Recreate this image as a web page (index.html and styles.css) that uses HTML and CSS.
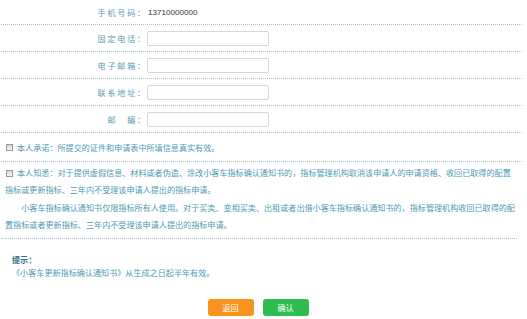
FILE: index.html
```html
<!DOCTYPE html>
<html lang="zh-CN">
<head>
<meta charset="utf-8">
<link rel="stylesheet" href="styles.css">
</head>
<body>
<div class="page">
  <div class="form-row first">
    <span class="label">手机号码：</span>
    <span class="value">13710000000</span>
  </div>
  <div class="form-row">
    <span class="label">固定电话：</span>
    <input class="field" type="text">
  </div>
  <div class="form-row">
    <span class="label">电子邮箱：</span>
    <input class="field" type="text">
  </div>
  <div class="form-row">
    <span class="label">联系地址：</span>
    <input class="field" type="text">
  </div>
  <div class="form-row">
    <span class="label">邮　编：</span>
    <input class="field" type="text">
  </div>
  <div class="check-row">
    <span class="box"></span><span>本人承诺：所提交的证件和申请表中所填信息真实有效。</span>
  </div>
  <div class="notice">
    <p class="para"><span class="box"></span>本人知悉：对于提供虚假信息、材料或者伪造、涂改小客车指标确认通知书的，指标管理机构取消该申请人的申请资格、收回已取得的配置指标或更新指标、三年内不受理该申请人提出的指标申请。</p>
    <p class="para indent">小客车指标确认通知书仅限指标所有人使用。对于买卖、变相买卖、出租或者出借小客车指标确认通知书的，指标管理机构收回已取得的配置指标或者更新指标、三年内不受理该申请人提出的指标申请。</p>
  </div>
  <div class="tips">
    <div class="tips-title">提示：</div>
    <div class="tips-text">《小客车更新指标确认通知书》从生成之日起半年有效。</div>
  </div>
  <div class="actions">
    <button class="btn btn-back" type="button">返回</button>
    <button class="btn btn-ok" type="button">确认</button>
  </div>
</div>
</body>
</html>
```
FILE: styles.css
```css
html, body {
  margin: 0;
  padding: 0;
  background: #ffffff;
}
body {
  font-family: "Noto Sans CJK SC", "Noto Sans", sans-serif;
  font-size: 8.1px;
  color: #4f9bb0;
}
.page {
  width: 527px;
  height: 319px;
  overflow: hidden;
}
.form-row {
  display: flex;
  align-items: center;
  height: 26px;
  margin: 0 5px 0 1px;
  border-bottom: 1px dotted #a9c3cc;
}
.form-row.first {
  height: 24px;
}
.label {
  width: 146px;
  text-align: right;
  letter-spacing: 1.8px;
  color: #5a9db2;
  white-space: nowrap;
}
.value {
  font-family: "Liberation Sans", Arial, sans-serif;
  color: #333333;
  font-size: 8.1px;
  margin-left: 1px;
}
.field {
  box-sizing: border-box;
  width: 122px;
  height: 15px;
  margin: 0;
  padding: 0;
  border: 1px solid #d6d6d6;
  border-radius: 2px;
  background: #ffffff;
  outline: none;
}
.check-row {
  display: flex;
  align-items: center;
  height: 28px;
  margin: 0 5px 0 1px;
  padding-left: 5px;
  border-bottom: 1px dotted #a9c3cc;
}
.box {
  display: inline-block;
  box-sizing: border-box;
  width: 7px;
  height: 7px;
  border: 1px solid #9a9a9a;
  background: linear-gradient(#d8d8d8, #f4f4f4);
  margin-right: 4px;
  vertical-align: -0.5px;
}
.notice {
  width: 512px;
  margin: 0 5px 0 1px;
  padding: 2px 0 4px 4px;
  border-bottom: 1px dotted #a9c3cc;
  box-sizing: content-box;
}
.para {
  margin: 0;
  line-height: 17.4px;
  width: 512px;
}
.para .box {
  margin-left: 1px;
}
.indent {
  text-indent: 16.2px;
}
.tips {
  padding: 14px 0 0 12px;
  line-height: 13.5px;
}
.tips-title {
  font-weight: bold;
  color: #2e7189;
}
.tips-text {
  color: #4f9bb0;
}
.actions {
  display: flex;
  justify-content: center;
  gap: 9px;
  width: 516px;
  margin-top: 19px;
}
.btn {
  width: 46px;
  height: 17px;
  border: none;
  border-radius: 3px;
  color: #ffffff;
  font-family: "Noto Sans CJK SC", sans-serif;
  font-size: 8.1px;
  padding: 0;
  line-height: 17px;
}
.btn-back {
  background: #f7941e;
}
.btn-ok {
  background: #2fbd52;
}
```
